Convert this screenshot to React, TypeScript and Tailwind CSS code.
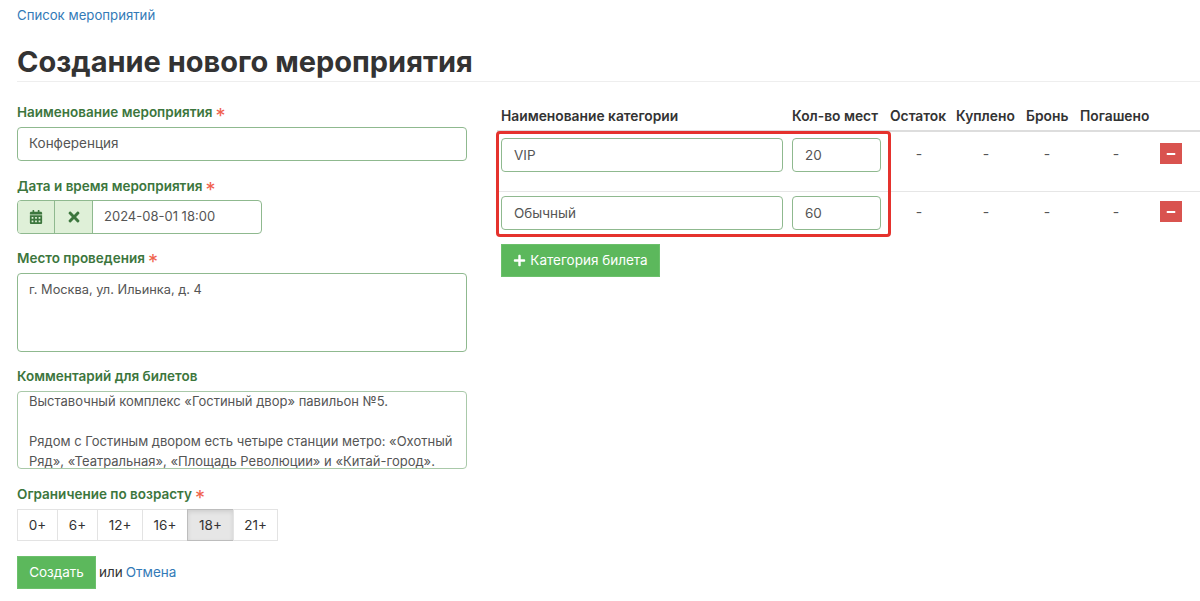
import { FaCalendarAlt, FaMinus, FaPlus, FaTimes } from 'react-icons/fa';

const ages = [
  { label: '0+', width: 'w-[41px]' },
  { label: '6+', width: 'w-[41px]' },
  { label: '12+', width: 'w-[46px]' },
  { label: '16+', width: 'w-[46px]' },
  { label: '18+', width: 'w-[47px]', active: true },
  { label: '21+', width: 'w-[45px]' },
];

const categories = [
  { name: 'VIP', seats: '20' },
  { name: 'Обычный', seats: '60' },
];

function Label({ text, required }: { text: string; required?: boolean }) {
  return (
    <div className="flex h-[15px] items-center pt-[1px] text-[13.5px] leading-[15px] font-semibold text-[#3c763d]">
      {text}
      {required && <span className="ml-[3px] h-[15px] text-[20px] leading-[22px] font-normal text-[#f0624d]">*</span>}
    </div>
  );
}

function Dash() {
  return <div className="text-center text-[14px] leading-[20px] text-[#555555]">-</div>;
}

export default function App() {
  return (
    <div className="h-[601px] w-[1200px] overflow-hidden bg-white pl-[17px] font-['Inter',sans-serif] text-[13.5px] text-[#333333]">
      <a className="block pt-[5px] text-[13.2px] leading-[20px] text-[#337ab7]">Список мероприятий</a>
      <h1 className="mt-[19px] h-[38px] border-b border-[#eeeeee] text-[29px] leading-[36px] font-bold text-[#333333]">
        Создание нового мероприятия
      </h1>

      <div className="mt-[22px] flex">
        <div className="w-[450px]">
          <Label text="Наименование мероприятия" required />
          <div className="mt-[8px] flex h-[34px] items-center rounded-[4px] border border-[#8fb98f] px-[11px] pb-[1px] text-[#555555]">
            Конференция
          </div>

          <div className="mt-[17px]">
            <Label text="Дата и время мероприятия" required />
          </div>
          <div className="mt-[7px] flex h-[34px] w-[245px] overflow-hidden rounded-[4px] border border-[#8fb98f] text-[#555555]">
            <div className="flex w-[37px] items-center justify-center border-r border-[#8fb98f] bg-[#dff0d8] text-[#3c763d]">
              <FaCalendarAlt size={14} />
            </div>
            <div className="flex w-[38px] items-center justify-center border-r border-[#8fb98f] bg-[#dff0d8] text-[#3c763d]">
              <FaTimes size={16} />
            </div>
            <div className="flex items-center pl-[11px] text-[13px]">2024-08-01 18:00</div>
          </div>

          <div className="mt-[16px]">
            <Label text="Место проведения" required />
          </div>
          <div className="mt-[8px] h-[79px] rounded-[4px] border border-[#8fb98f] px-[11px] py-[6px] text-[12.8px] leading-[20px] text-[#555555]">
            г. Москва, ул. Ильинка, д. 4
          </div>

          <div className="mt-[16px]">
            <Label text="Комментарий для билетов" />
          </div>
          <div className="mt-[8px] h-[78px] overflow-hidden rounded-[4px] border border-[#a9c9a9] px-[11px] text-[13px] leading-[20px] text-[#555555]">
            <div className="-mt-[1px]">
              Выставочный комплекс «Гостиный двор» павильон №5.
              <br />
              <br />
              Рядом с Гостиным двором есть четыре станции метро: «Охотный Ряд», «Театральная», «Площадь Революции» и «Китай-город».
            </div>
          </div>

          <div className="mt-[17px]">
            <Label text="Ограничение по возрасту" required />
          </div>
          <div className="mt-[8px] flex h-[32px]">
            {ages.map((age) => (
              <div
                key={age.label}
                className={
                  age.active
                    ? `-ml-px flex ${age.width} items-center justify-center border border-[#bdbdbd] bg-[#e6e6e6] text-[#333333] shadow-[inset_0_2px_4px_rgba(0,0,0,0.1)] first:ml-0`
                    : `-ml-px flex ${age.width} items-center justify-center border border-[#e3e3e3] text-[#333333] first:ml-0`
                }
              >
                {age.label}
              </div>
            ))}
          </div>

          <div className="mt-[15px] flex items-center">
            <button className="h-[33px] w-[79px] border border-[#6cc06c] bg-[#5cb85c] text-white">Создать</button>
            <span className="ml-[3px] text-[#333333]">или</span>
            <a className="ml-[3px] text-[#337ab7]">Отмена</a>
          </div>
        </div>

        <div className="relative ml-[30px] w-[703px]">
          <div className="flex h-[28px] border-b-2 border-[#dddddd] pt-[4px] text-[13.8px] leading-[17px] font-semibold">
            <div className="w-[295px] pl-[4px]">Наименование категории</div>
            <div className="w-[98px]">Кол-во мест</div>
            <div className="w-[66px]">Остаток</div>
            <div className="w-[70px]">Куплено</div>
            <div className="w-[54px]">Бронь</div>
            <div className="w-[80px]">Погашено</div>
          </div>

          {categories.map((category, i) => (
            <div key={category.name} className={i > 0 ? 'flex h-[53px] border-t border-[#e6e6e6] pt-[4px]' : 'flex h-[59px] pt-[6px]'}>
              <div className="ml-[4px] flex h-[34px] w-[282px] items-center rounded-[4px] border border-[#8fb98f] px-[12px] text-[#555555]">
                {category.name}
              </div>
              <div className="ml-[9px] flex h-[34px] w-[89px] items-center rounded-[4px] border border-[#8fb98f] px-[12px] text-[#555555]">
                {category.seats}
              </div>
              <div className="ml-[9px] w-[58px] pt-[6px]"><Dash /></div>
              <div className="ml-[9px] w-[58px] pt-[6px]"><Dash /></div>
              <div className="ml-[7px] w-[50px] pt-[6px]"><Dash /></div>
              <div className="ml-[15px] w-[58px] pt-[6px]"><Dash /></div>
              <div className="mt-[5px] ml-[15px] flex h-[21px] w-[22px] items-center justify-center bg-[#d9534f] text-white">
                <FaMinus size={10} />
              </div>
            </div>
          ))}

          <button className="ml-[4px] flex h-[33px] w-[159px] items-center justify-center gap-[4px] border border-[#6cc06c] bg-[#5cb85c] text-white">
            <FaPlus size={13} />
            Категория билета
          </button>

          {/* красная рамка поверх таблицы */}
          <div className="absolute top-[27px] left-[-1px] h-[106px] w-[395px] rounded-[4px] border-[3px] border-[#e5322d]" />
        </div>
      </div>
    </div>
  );
}
